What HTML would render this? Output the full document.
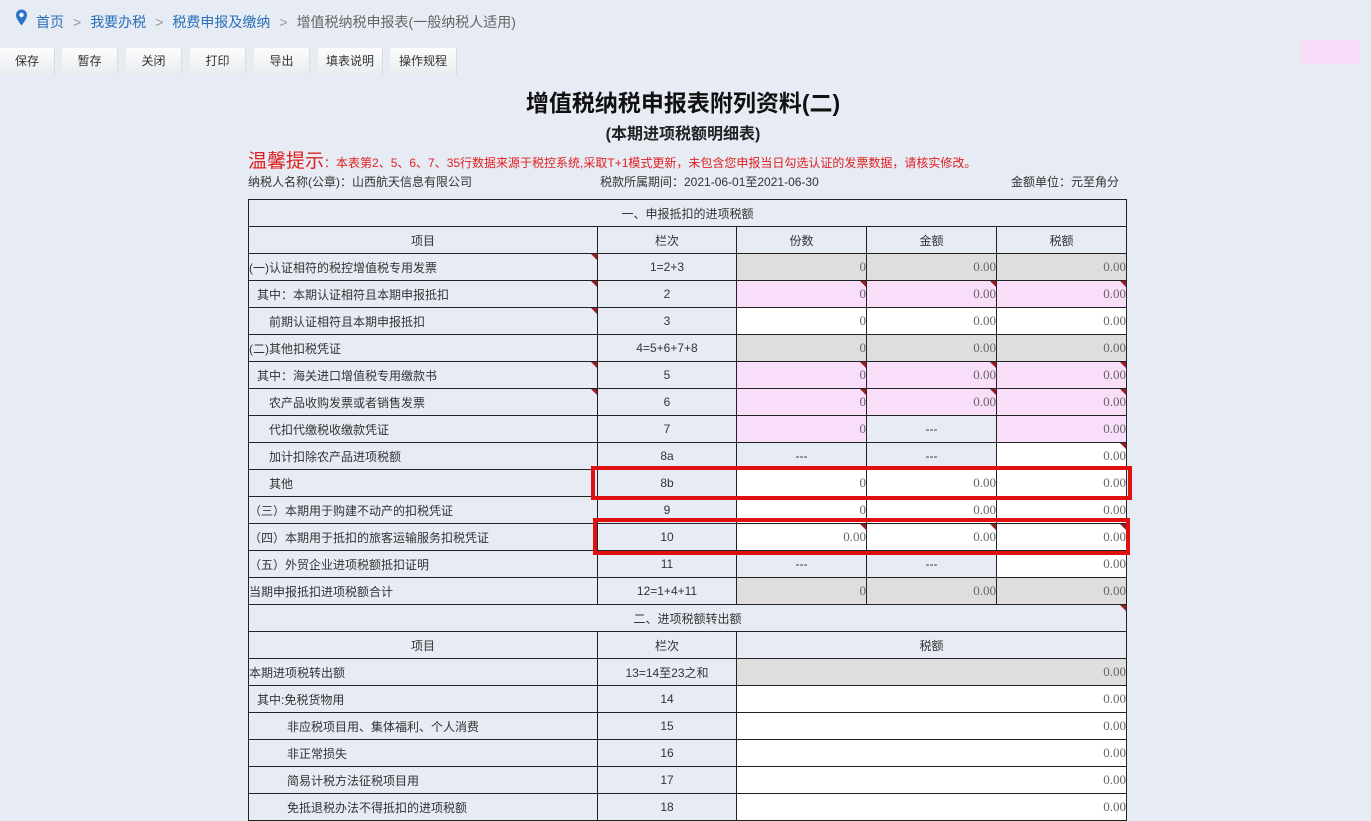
<!DOCTYPE html>
<html><head><meta charset="utf-8">
<style>
*{margin:0;padding:0;box-sizing:border-box}
body{width:1371px;height:813px;overflow:hidden;background:#e6ebf4;font-family:"Liberation Sans","Noto Sans CJK SC",sans-serif;font-size:12px;color:#333;position:relative}
.abs{position:absolute;white-space:nowrap}
.crumb{top:12px;left:36px;font-size:14px;color:#666}
.crumb a{color:#2a6fb8;text-decoration:none}
.crumb span.s{color:#999;margin:0 9px}
.btn{position:absolute;top:48px;height:27px;line-height:27px;text-align:center;font-size:12px;color:#333;background:linear-gradient(#fbfcfd,#e9ecef);border-right:1px solid #d9dde2}
table{position:absolute;left:248px;top:199px;border-collapse:collapse;table-layout:fixed;width:879px}
td{border:1px solid #222;height:27px;padding:0;font-size:12px;position:relative;white-space:nowrap;overflow:hidden}
td.c{text-align:center}
td.n{text-align:right;font-family:"Liberation Serif",serif;font-size:13px;color:#666;padding-right:0}
.g{background:#dedede}.p{background:#f8def8}.w{background:#fff}
td.t::after{content:"";position:absolute;right:0;top:0;border-top:6px solid #9b1c22;border-left:6px solid transparent}
.red{position:absolute;border:4px solid #e01010}
</style></head><body>
<svg class="abs" style="left:15px;top:9px" width="13" height="17" viewBox="0 0 13 17"><path d="M6.5 0.5C3.2 0.5 1 3 1 6c0 4 5.5 10.5 5.5 10.5S12 10 12 6C12 3 9.8 0.5 6.5 0.5z" fill="#2a73c9"/><circle cx="6.5" cy="6" r="2.2" fill="#fff"/></svg>
<div class="abs crumb"><a>首页</a><span class="s">&gt;</span><a>我要办税</a><span class="s">&gt;</span><a>税费申报及缴纳</a><span class="s">&gt;</span>增值税纳税申报表(一般纳税人适用)</div>
<div class="btn" style="left:0;width:55px">保存</div>
<div class="btn" style="left:62px;width:56px">暂存</div>
<div class="btn" style="left:126px;width:56px">关闭</div>
<div class="btn" style="left:190px;width:56px">打印</div>
<div class="btn" style="left:254px;width:56px">导出</div>
<div class="btn" style="left:318px;width:65px">填表说明</div>
<div class="btn" style="left:390px;width:67px">操作规程</div>
<div class="abs" style="left:1300px;top:40px;width:60px;height:24px;background:#f9dcf7"></div>
<div class="abs" style="left:0;width:1366px;top:84px;text-align:center;font-size:23px;font-weight:bold;color:#111">增值税纳税申报表附列资料(二)</div>
<div class="abs" style="left:0;width:1366px;top:120px;text-align:center;font-size:16px;font-weight:bold;color:#222">(本期进项税额明细表)</div>
<div class="abs" style="left:248px;top:146px;color:#e02020;font-size:12px"><span style="font-size:19px">温馨提示</span>：本表第2、5、6、7、35行数据来源于税控系统,采取T+1模式更新，未包含您申报当日勾选认证的发票数据，请核实修改。</div>
<div class="abs" style="left:248px;top:173px">纳税人名称(公章)：山西航天信息有限公司</div>
<div class="abs" style="left:600px;top:173px">税款所属期间：2021-06-01至2021-06-30</div>
<div class="abs" style="left:1011px;top:173px">金额单位：元至角分</div>
<table>
<colgroup><col style="width:349px"><col style="width:139px"><col style="width:130px"><col style="width:130px"><col style="width:130px"></colgroup>
<tr><td colspan="5" class="c">一、申报抵扣的进项税额</td></tr>
<tr><td class="c">项目</td><td class="c">栏次</td><td class="c">份数</td><td class="c">金额</td><td class="c">税额</td></tr>
<tr><td class="t">(一)认证相符的税控增值税专用发票</td><td class="c">1=2+3</td><td class="n g">0</td><td class="n g">0.00</td><td class="n g">0.00</td></tr>
<tr><td class="t" style="padding-left:8px">其中：本期认证相符且本期申报抵扣</td><td class="c">2</td><td class="n p t">0</td><td class="n p t">0.00</td><td class="n p t">0.00</td></tr>
<tr><td class="t" style="padding-left:20px">前期认证相符且本期申报抵扣</td><td class="c">3</td><td class="n w">0</td><td class="n w">0.00</td><td class="n w">0.00</td></tr>
<tr><td>(二)其他扣税凭证</td><td class="c">4=5+6+7+8</td><td class="n g">0</td><td class="n g">0.00</td><td class="n g">0.00</td></tr>
<tr><td class="t" style="padding-left:8px">其中：海关进口增值税专用缴款书</td><td class="c">5</td><td class="n p t">0</td><td class="n p t">0.00</td><td class="n p t">0.00</td></tr>
<tr><td class="t" style="padding-left:20px">农产品收购发票或者销售发票</td><td class="c">6</td><td class="n p t">0</td><td class="n p t">0.00</td><td class="n p t">0.00</td></tr>
<tr><td style="padding-left:20px">代扣代缴税收缴款凭证</td><td class="c">7</td><td class="n p">0</td><td class="c">---</td><td class="n p">0.00</td></tr>
<tr><td style="padding-left:20px">加计扣除农产品进项税额</td><td class="c">8a</td><td class="c">---</td><td class="c">---</td><td class="n w t">0.00</td></tr>
<tr><td style="padding-left:20px">其他</td><td class="c">8b</td><td class="n w">0</td><td class="n w">0.00</td><td class="n w">0.00</td></tr>
<tr><td>（三）本期用于购建不动产的扣税凭证</td><td class="c">9</td><td class="n w">0</td><td class="n w">0.00</td><td class="n w">0.00</td></tr>
<tr><td>（四）本期用于抵扣的旅客运输服务扣税凭证</td><td class="c">10</td><td class="n w t">0.00</td><td class="n w t">0.00</td><td class="n w t">0.00</td></tr>
<tr><td>（五）外贸企业进项税额抵扣证明</td><td class="c">11</td><td class="c">---</td><td class="c">---</td><td class="n w">0.00</td></tr>
<tr><td>当期申报抵扣进项税额合计</td><td class="c">12=1+4+11</td><td class="n g">0</td><td class="n g">0.00</td><td class="n g">0.00</td></tr>
<tr><td colspan="5" class="c t">二、进项税额转出额</td></tr>
<tr><td class="c">项目</td><td class="c">栏次</td><td colspan="3" class="c">税额</td></tr>
<tr><td>本期进项税转出额</td><td class="c">13=14至23之和</td><td colspan="3" class="n g">0.00</td></tr>
<tr><td style="padding-left:8px">其中:免税货物用</td><td class="c">14</td><td colspan="3" class="n w">0.00</td></tr>
<tr><td style="padding-left:38px">非应税项目用、集体福利、个人消费</td><td class="c">15</td><td colspan="3" class="n w">0.00</td></tr>
<tr><td style="padding-left:38px">非正常损失</td><td class="c">16</td><td colspan="3" class="n w">0.00</td></tr>
<tr><td style="padding-left:38px">简易计税方法征税项目用</td><td class="c">17</td><td colspan="3" class="n w">0.00</td></tr>
<tr><td style="padding-left:38px">免抵退税办法不得抵扣的进项税额</td><td class="c">18</td><td colspan="3" class="n w">0.00</td></tr>
</table>
<div class="red" style="left:591px;top:466px;width:541px;height:34px"></div>
<div class="red" style="left:593px;top:518px;width:537px;height:37px"></div>
</body></html>
